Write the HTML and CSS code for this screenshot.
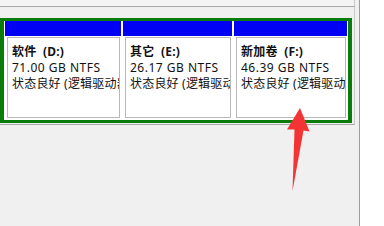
FILE: index.html
```html
<!DOCTYPE html>
<html>
<head>
<meta charset="utf-8">
<link rel="stylesheet" href="styles.css">
</head>
<body>
<div class="screen">
  <div class="main">
    <div class="row row-top"></div>
    <div class="row">
      <div class="extended">
        <div class="part p1">
          <div class="bar"></div>
          <div class="info">
            <div class="name">软件 &nbsp;(D:)</div>
            <div class="size">71.00 GB NTFS</div>
            <div class="line">状态良好 (逻辑驱动器)</div>
          </div>
        </div>
        <div class="part p2">
          <div class="bar"></div>
          <div class="info">
            <div class="name">其它 &nbsp;(E:)</div>
            <div class="size">26.17 GB NTFS</div>
            <div class="line">状态良好 (逻辑驱动器)</div>
          </div>
        </div>
        <div class="part p3">
          <div class="bar"></div>
          <div class="info">
            <div class="name">新加卷 &nbsp;(F:)</div>
            <div class="size">46.39 GB NTFS</div>
            <div class="line">状态良好 (逻辑驱动器)</div>
          </div>
        </div>
      </div>
    </div>
  </div>
  <div class="divider"></div>
  <div class="side"></div>
</div>
<svg class="arrow" width="384" height="226" viewBox="0 0 384 226">
  <polygon points="300,108 309.5,131.5 303.5,130.5 292.5,191 294.5,129.5 287,129.5" fill="#f43434"/>
</svg>
</body>
</html>
```

FILE: styles.css
```css
html, body {
  margin: 0;
  padding: 0;
}
body {
  width: 384px;
  height: 226px;
  overflow: hidden;
  position: relative;
  font-family: "Noto Sans", "Noto Sans CJK SC", sans-serif;
  font-size: 12px;
  letter-spacing: 0.2px;
  color: #111;
}
.screen {
  display: flex;
  height: 226px;
}
.main {
  width: 359px;
  background: #f0f0f0;
  flex: none;
}
.divider {
  width: 1px;
  background: #9c9c9c;
  flex: none;
}
.side {
  flex: 1;
  background: #fff;
}
.row {
  width: 354px;
  border-right: 1px solid #c8c8c8;
  border-bottom: 1px solid #a8a8a8;
  padding-top: 11px;
  padding-bottom: 1px;
}
.row-top {
  height: 6px;
  padding: 0;
  background: #f4f4f4;
}
.extended {
  width: 342px;
  height: 98px;
  border: 3px solid #0a7c0a;
  border-left-width: 4px;
  border-right-width: 4px;
  padding: 0 1px 1px 1px;
  background: #fff;
  display: flex;
  gap: 2px;
}
.part {
  display: flex;
  flex-direction: column;
  background: #fff;
}
.p1 { width: 116px; }
.p2 { width: 109px; }
.p3 { width: 113px; }
.bar {
  height: 15px;
  background: #0000f4;
  flex: none;
}
.info {
  flex: 1;
  margin: 1px 1px 1px 2px;
  border: 1px solid #b8b8b8;
  padding: 6px 0 0 4px;
  overflow: hidden;
  white-space: nowrap;
  line-height: 16px;
}
.name {
  font-weight: bold;
}
.size {
  letter-spacing: 0.5px;
}
.arrow {
  position: absolute;
  left: 0;
  top: 0;
}
```
